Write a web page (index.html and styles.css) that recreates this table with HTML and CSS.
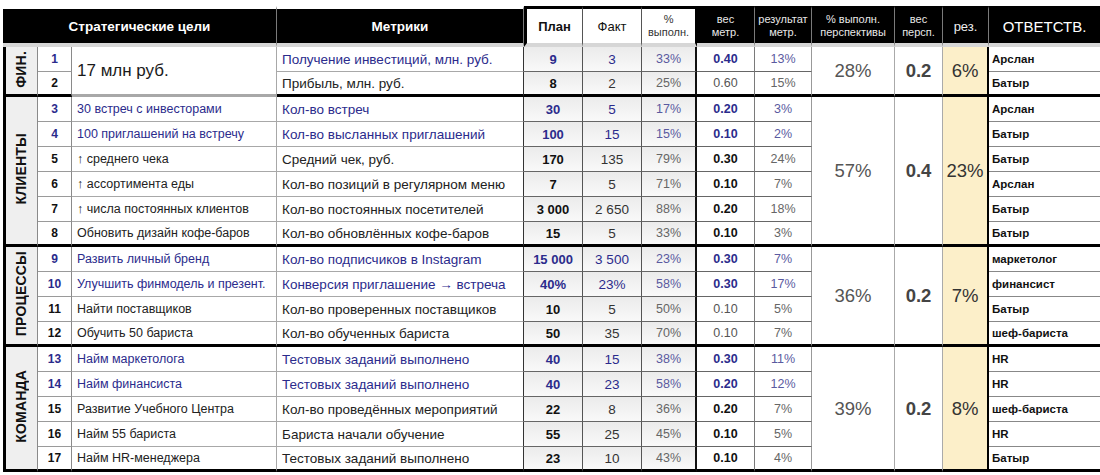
FILE: index.html
```html
<!DOCTYPE html>
<html lang="ru">
<head>
<meta charset="utf-8">
<title>Стратегическая карта</title>
<link rel="stylesheet" href="styles.css">
</head>
<body>
<table class="bsc">
  <colgroup>
    <col class="c-sec"><col class="c-num"><col class="c-goal"><col class="c-met">
    <col class="c-plan"><col class="c-fact"><col class="c-pct"><col class="c-w"><col class="c-res">
    <col class="c-pp"><col class="c-wp"><col class="c-rz"><col class="c-own">
  </colgroup>
  <thead>
    <tr>
      <th colspan="3" class="h-left h-big">Стратегические цели</th>
      <th class="h-left h-big">Метрики</th>
      <th class="h-white h-first h-bold">План</th>
      <th class="h-white">Факт</th>
      <th class="h-white h-small">%<br>выполн.</th>
      <th class="h-small">вес<br>метр.</th>
      <th class="h-small">результат<br>метр.</th>
      <th class="h-small">% выполн.<br>перспективы</th>
      <th class="h-small">вес<br>персп.</th>
      <th class="h-mid">рез.</th>
      <th class="h-own">ОТВЕТСТВ.</th>
    </tr>
  </thead>
  <tbody>
    <tr class="blue">
      <td rowspan="2" class="sec se"><span class="vlabel">ФИН.</span></td>
      <td class="num">1</td>
      <td rowspan="2" class="goal big-goal se">17 млн руб.</td>
      <td class="met">Получение инвестиций, млн. руб.</td>
      <td class="plan">9</td><td class="fact">3</td><td class="pct">33%</td><td class="w">0.40</td><td class="res">13%</td>
      <td rowspan="2" class="pp se">28%</td><td rowspan="2" class="wp se">0.2</td><td rowspan="2" class="rz se">6%</td>
      <td class="own">Арслан</td>
    </tr>
    <tr class="last">
      <td class="num">2</td>
      <td class="met">Прибыль, млн. руб.</td>
      <td class="plan">8</td><td class="fact">2</td><td class="pct">25%</td><td class="w light">0.60</td><td class="res">15%</td>
      <td class="own">Батыр</td>
    </tr>

    <tr class="blue">
      <td rowspan="6" class="sec se"><span class="vlabel">КЛИЕНТЫ</span></td>
      <td class="num">3</td>
      <td class="goal">30 встреч с инвесторами</td>
      <td class="met">Кол-во встреч</td>
      <td class="plan">30</td><td class="fact">5</td><td class="pct">17%</td><td class="w">0.20</td><td class="res">3%</td>
      <td rowspan="6" class="pp se">57%</td><td rowspan="6" class="wp se">0.4</td><td rowspan="6" class="rz se">23%</td>
      <td class="own">Арслан</td>
    </tr>
    <tr class="blue">
      <td class="num">4</td>
      <td class="goal">100 приглашений на встречу</td>
      <td class="met">Кол-во высланных приглашений</td>
      <td class="plan">100</td><td class="fact">15</td><td class="pct">15%</td><td class="w">0.10</td><td class="res">2%</td>
      <td class="own">Батыр</td>
    </tr>
    <tr>
      <td class="num">5</td>
      <td class="goal">↑ среднего чека</td>
      <td class="met">Средний чек, руб.</td>
      <td class="plan">170</td><td class="fact">135</td><td class="pct">79%</td><td class="w">0.30</td><td class="res">24%</td>
      <td class="own">Батыр</td>
    </tr>
    <tr>
      <td class="num">6</td>
      <td class="goal">↑ ассортимента еды</td>
      <td class="met">Кол-во позиций в регулярном меню</td>
      <td class="plan">7</td><td class="fact">5</td><td class="pct">71%</td><td class="w">0.10</td><td class="res">7%</td>
      <td class="own">Арслан</td>
    </tr>
    <tr>
      <td class="num">7</td>
      <td class="goal">↑ числа постоянных клиентов</td>
      <td class="met">Кол-во постоянных посетителей</td>
      <td class="plan">3 000</td><td class="fact">2 650</td><td class="pct">88%</td><td class="w">0.20</td><td class="res">18%</td>
      <td class="own">Батыр</td>
    </tr>
    <tr class="last">
      <td class="num">8</td>
      <td class="goal">Обновить дизайн кофе-баров</td>
      <td class="met">Кол-во обновлённых кофе-баров</td>
      <td class="plan">15</td><td class="fact">5</td><td class="pct">33%</td><td class="w">0.10</td><td class="res">3%</td>
      <td class="own">Батыр</td>
    </tr>

    <tr class="blue">
      <td rowspan="4" class="sec se"><span class="vlabel">ПРОЦЕССЫ</span></td>
      <td class="num">9</td>
      <td class="goal">Развить личный бренд</td>
      <td class="met">Кол-во подписчиков в Instagram</td>
      <td class="plan">15 000</td><td class="fact">3 500</td><td class="pct">23%</td><td class="w">0.30</td><td class="res">7%</td>
      <td rowspan="4" class="pp se">36%</td><td rowspan="4" class="wp se">0.2</td><td rowspan="4" class="rz se">7%</td>
      <td class="own">маркетолог</td>
    </tr>
    <tr class="blue">
      <td class="num">10</td>
      <td class="goal">Улучшить финмодель и презент.</td>
      <td class="met">Конверсия приглашение → встреча</td>
      <td class="plan">40%</td><td class="fact">23%</td><td class="pct">58%</td><td class="w">0.30</td><td class="res">17%</td>
      <td class="own">финансист</td>
    </tr>
    <tr>
      <td class="num">11</td>
      <td class="goal">Найти поставщиков</td>
      <td class="met">Кол-во проверенных поставщиков</td>
      <td class="plan">10</td><td class="fact">5</td><td class="pct">50%</td><td class="w light">0.10</td><td class="res">5%</td>
      <td class="own">Батыр</td>
    </tr>
    <tr class="last">
      <td class="num">12</td>
      <td class="goal">Обучить 50 бариста</td>
      <td class="met">Кол-во обученных бариста</td>
      <td class="plan">50</td><td class="fact">35</td><td class="pct">70%</td><td class="w light">0.10</td><td class="res">7%</td>
      <td class="own">шеф-бариста</td>
    </tr>

    <tr class="blue">
      <td rowspan="5" class="sec se"><span class="vlabel">КОМАНДА</span></td>
      <td class="num">13</td>
      <td class="goal">Найм маркетолога</td>
      <td class="met">Тестовых заданий выполнено</td>
      <td class="plan">40</td><td class="fact">15</td><td class="pct">38%</td><td class="w">0.30</td><td class="res">11%</td>
      <td rowspan="5" class="pp se">39%</td><td rowspan="5" class="wp se">0.2</td><td rowspan="5" class="rz se">8%</td>
      <td class="own">HR</td>
    </tr>
    <tr class="blue">
      <td class="num">14</td>
      <td class="goal">Найм финансиста</td>
      <td class="met">Тестовых заданий выполнено</td>
      <td class="plan">40</td><td class="fact">23</td><td class="pct">58%</td><td class="w">0.20</td><td class="res">12%</td>
      <td class="own">HR</td>
    </tr>
    <tr>
      <td class="num">15</td>
      <td class="goal">Развитие Учебного Центра</td>
      <td class="met">Кол-во проведённых мероприятий</td>
      <td class="plan">22</td><td class="fact">8</td><td class="pct">36%</td><td class="w">0.20</td><td class="res">7%</td>
      <td class="own">шеф-бариста</td>
    </tr>
    <tr>
      <td class="num">16</td>
      <td class="goal">Найм 55 бариста</td>
      <td class="met">Бариста начали обучение</td>
      <td class="plan">55</td><td class="fact">25</td><td class="pct">45%</td><td class="w">0.10</td><td class="res">5%</td>
      <td class="own">HR</td>
    </tr>
    <tr class="last">
      <td class="num">17</td>
      <td class="goal">Найм HR-менеджера</td>
      <td class="met">Тестовых заданий выполнено</td>
      <td class="plan">23</td><td class="fact">10</td><td class="pct">43%</td><td class="w">0.10</td><td class="res">4%</td>
      <td class="own">Батыр</td>
    </tr>
  </tbody>
</table>
</body>
</html>
```

FILE: styles.css
```css
html, body {
  margin: 0;
  padding: 0;
  background: #ffffff;
  overflow: hidden;
}

body {
  font-family: "Liberation Sans", Arial, sans-serif;
  color: #222;
  padding: 6px 0 0 3px;
}

.bsc {
  border-collapse: separate;
  border-spacing: 0;
  table-layout: fixed;
  width: 1097px;
}

.c-sec { width: 35px; }
.c-num { width: 34px; }
.c-goal { width: 205px; }
.c-met { width: 247px; }
.c-plan { width: 59px; }
.c-fact { width: 59px; }
.c-pct { width: 55px; }
.c-w { width: 58px; }
.c-res { width: 57px; }
.c-pp { width: 83px; }
.c-wp { width: 48px; }
.c-rz { width: 46px; }
.c-own { width: 111px; }

/* ---------- header ---------- */
.bsc th {
  height: 34px;
  padding: 0;
  background: #000;
  color: #fff;
  font-weight: normal;
  font-size: 11px;
  line-height: 13px;
  text-align: center;
  vertical-align: middle;
  border-top: 3px solid #000;
  border-bottom: 4px solid #d6d6d6;
  border-right: 1px solid #7a7a7a;
}

.bsc th.h-left {
  border-top-color: #fff;
}

.bsc th.h-big {
  font-size: 13.5px;
  font-weight: bold;
}

.bsc th.h-white {
  background: #fff;
  color: #111;
  font-size: 13px;
  border-right-color: #555;
}

.bsc th.h-first {
  border-left: 3px solid #000;
}

.bsc th.h-bold {
  font-weight: bold;
}

.bsc th.h-white.h-small {
  font-size: 11px;
  color: #333;
  border-right: 2px solid #000;
}

.bsc th.h-small {
  color: #e8e8e8;
}

.bsc th.h-mid {
  font-size: 13px;
  color: #eee;
}

.bsc th.h-own {
  font-size: 15px;
  text-align: center;
  border-right: none;
}

/* ---------- body ---------- */
.bsc td {
  height: 24px;
  padding: 0 4px;
  font-size: 13px;
  line-height: 15px;
  vertical-align: middle;
  white-space: nowrap;
  overflow: hidden;
  border-right: 1px solid #7a7a7a;
  border-bottom: 1px solid #9a9a9a;
  color: #222;
}

.bsc tr.last td {
  height: 22px;
  border-bottom: 3px solid #000;
}

.bsc td.se {
  height: auto;
  border-bottom: 3px solid #000;
}

.bsc td.sec {
  background: #efefef;
  border-left: 3px solid #000;
  border-right: 1px solid #8a8a8a;
  text-align: center;
  padding: 0;
}

.vlabel {
  display: inline-block;
  writing-mode: vertical-rl;
  transform: rotate(180deg);
  font-weight: bold;
  font-size: 14px;
  letter-spacing: 0.2px;
  color: #111;
}

.bsc td.num {
  text-align: center;
  font-weight: bold;
  font-size: 12px;
  padding: 0;
  color: #111;
  border-right-color: #8a8a8a;
}

.bsc td.goal {
  font-size: 12.5px;
  padding-left: 5px;
  border-right-color: #a8a8a8;
  border-bottom-color: #a8a8a8;
}

.bsc td.big-goal {
  font-size: 17px;
  color: #1a1a1a;
}

.bsc td.met {
  font-size: 13.5px;
  padding-left: 5px;
  border-right: 1px solid #333;
  border-bottom-color: #a8a8a8;
}

.bsc td.plan,
.bsc td.fact,
.bsc td.pct {
  background: linear-gradient(#ebebeb, #f9f9f9);
  text-align: center;
  padding: 0;
  border-right-color: #555;
  border-bottom-color: #666;
}

.bsc td.plan {
  font-weight: bold;
  color: #111;
}

.bsc td.fact {
  color: #333;
  font-size: 13.5px;
}

.bsc td.pct {
  color: #666;
  font-size: 12.5px;
  border-right: 2px solid #111;
}

.bsc td.w {
  text-align: center;
  font-weight: bold;
  font-size: 12.5px;
  padding: 0;
  color: #111;
  border-bottom-color: #666;
}

.bsc td.w.light {
  font-weight: normal;
  color: #555;
}

.bsc td.res {
  text-align: center;
  padding: 0;
  font-size: 12.5px;
  color: #666;
  border-bottom-color: #666;
  border-right-color: #999;
}

.bsc td.pp {
  text-align: center;
  font-size: 18.5px;
  color: #555;
  border-right-color: #aaa;
}

.bsc td.wp {
  text-align: center;
  font-size: 18.5px;
  font-weight: bold;
  color: #444;
  border-right-color: #aaa;
  padding: 0;
}

.bsc td.rz {
  background: #fcefc9;
  text-align: center;
  font-size: 18.5px;
  color: #333;
  padding: 0;
  border-right: 2px solid #000;
}

.bsc td.own {
  font-size: 11.5px;
  font-weight: bold;
  color: #111;
  padding-left: 3px;
  border-right: none;
  border-bottom-color: #888;
}

/* blue rows */
.bsc tr.blue td.num,
.bsc tr.blue td.goal,
.bsc tr.blue td.met,
.bsc tr.blue td.plan,
.bsc tr.blue td.fact,
.bsc tr.blue td.w {
  color: #2b2b8c;
}

.bsc tr.blue td.pct,
.bsc tr.blue td.res {
  color: #5a5aa0;
}

.bsc tr.blue td.big-goal {
  color: #1a1a1a;
}
```
